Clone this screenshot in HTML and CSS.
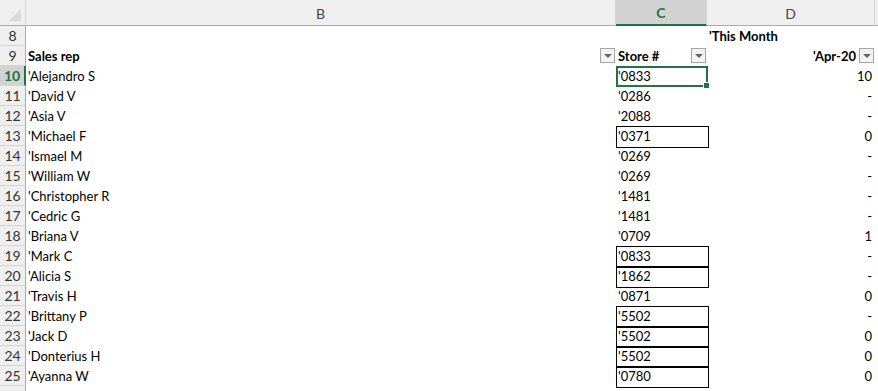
FILE: index.html
```html
<!DOCTYPE html>
<html lang="en">
<head>
    <meta charset="UTF-8">
    <title>Sales by store</title>
    <link rel="stylesheet" href="styles.css">
</head>
<body>
    <div class="sheet">
        <div class="row head-row">
            <div class="corner"><span class="corner-tri"></span></div>
            <div class="col-head">B</div>
            <div class="col-head selected">C</div>
            <div class="col-head">D</div>
            <div class="col-head last"></div>
        </div>

        <div class="row">
            <div class="row-head">8</div>
            <div class="cell"></div>
            <div class="cell"></div>
            <div class="cell bold">'This Month</div>
            <div class="cell"></div>
        </div>
        <div class="row">
            <div class="row-head">9</div>
            <div class="cell bold">Sales rep<span class="filter"></span></div>
            <div class="cell bold">Store #<span class="filter"></span></div>
            <div class="cell bold num has-filter">'Apr-20<span class="filter"></span></div>
            <div class="cell"></div>
        </div>
        <div class="row">
            <div class="row-head selected">10</div>
            <div class="cell">'Alejandro S</div>
            <div class="cell active">'0833</div>
            <div class="cell num">10</div>
            <div class="cell"></div>
        </div>
        <div class="row">
            <div class="row-head">11</div>
            <div class="cell">'David V</div>
            <div class="cell">'0286</div>
            <div class="cell num">-</div>
            <div class="cell"></div>
        </div>
        <div class="row">
            <div class="row-head">12</div>
            <div class="cell">'Asia V</div>
            <div class="cell">'2088</div>
            <div class="cell num">-</div>
            <div class="cell"></div>
        </div>
        <div class="row">
            <div class="row-head">13</div>
            <div class="cell">'Michael F</div>
            <div class="cell boxed">'0371</div>
            <div class="cell num">0</div>
            <div class="cell"></div>
        </div>
        <div class="row">
            <div class="row-head">14</div>
            <div class="cell">'Ismael M</div>
            <div class="cell">'0269</div>
            <div class="cell num">-</div>
            <div class="cell"></div>
        </div>
        <div class="row">
            <div class="row-head">15</div>
            <div class="cell">'William W</div>
            <div class="cell">'0269</div>
            <div class="cell num">-</div>
            <div class="cell"></div>
        </div>
        <div class="row">
            <div class="row-head">16</div>
            <div class="cell">'Christopher R</div>
            <div class="cell">'1481</div>
            <div class="cell num">-</div>
            <div class="cell"></div>
        </div>
        <div class="row">
            <div class="row-head">17</div>
            <div class="cell">'Cedric G</div>
            <div class="cell">'1481</div>
            <div class="cell num">-</div>
            <div class="cell"></div>
        </div>
        <div class="row">
            <div class="row-head">18</div>
            <div class="cell">'Briana V</div>
            <div class="cell">'0709</div>
            <div class="cell num">1</div>
            <div class="cell"></div>
        </div>
        <div class="row">
            <div class="row-head">19</div>
            <div class="cell">'Mark C</div>
            <div class="cell boxed">'0833</div>
            <div class="cell num">-</div>
            <div class="cell"></div>
        </div>
        <div class="row">
            <div class="row-head">20</div>
            <div class="cell">'Alicia S</div>
            <div class="cell boxed">'1862</div>
            <div class="cell num">-</div>
            <div class="cell"></div>
        </div>
        <div class="row">
            <div class="row-head">21</div>
            <div class="cell">'Travis H</div>
            <div class="cell">'0871</div>
            <div class="cell num">0</div>
            <div class="cell"></div>
        </div>
        <div class="row">
            <div class="row-head">22</div>
            <div class="cell">'Brittany P</div>
            <div class="cell boxed">'5502</div>
            <div class="cell num">-</div>
            <div class="cell"></div>
        </div>
        <div class="row">
            <div class="row-head">23</div>
            <div class="cell">'Jack D</div>
            <div class="cell boxed">'5502</div>
            <div class="cell num">0</div>
            <div class="cell"></div>
        </div>
        <div class="row">
            <div class="row-head">24</div>
            <div class="cell">'Donterius H</div>
            <div class="cell boxed">'5502</div>
            <div class="cell num">0</div>
            <div class="cell"></div>
        </div>
        <div class="row">
            <div class="row-head">25</div>
            <div class="cell">'Ayanna W</div>
            <div class="cell boxed">'0780</div>
            <div class="cell num">0</div>
            <div class="cell"></div>
        </div>
        <div class="row">
            <div class="row-head"></div>
            <div class="cell"></div>
            <div class="cell"></div>
            <div class="cell"></div>
            <div class="cell"></div>
        </div>
    </div>
</body>
</html>
```

FILE: styles.css
```css
body {
    margin: 0;
    background-color: #fff;
    font-family: Lato, 'Liberation Sans', sans-serif;
    font-size: 13px;
    color: #000;
    overflow: hidden;
}
.sheet {
    width: 878px;
}
.row {
    display: grid;
    grid-template-columns: 26px 590px 91px 168px 1fr;
    height: 20px;
}
.head-row {
    height: 26px;
}
.corner {
    position: relative;
    background-color: #efefef;
    border-right: 1px solid #d4d4d4;
    border-bottom: 1px solid #ababab;
}
.corner-tri {
    position: absolute;
    right: 4px;
    bottom: 4px;
    width: 0;
    height: 0;
    border-left: 12px solid transparent;
    border-bottom: 12px solid #dadada;
}
.col-head {
    background-color: #efefef;
    border-right: 1px solid #d4d4d4;
    border-bottom: 1px solid #ababab;
    color: #444;
    font-size: 14px;
    display: flex;
    align-items: center;
    justify-content: center;
    padding-top: 1px;
}
.col-head.selected {
    background-color: #d2d2d2;
    color: #217346;
    font-weight: bold;
    border-bottom: 2px solid #217346;
}
.col-head.last {
    border-right: none;
}
.row-head {
    background-color: #efefef;
    border-right: 1px solid #ababab;
    border-bottom: 1px solid #d4d4d4;
    color: #333;
    font-size: 14px;
    display: flex;
    align-items: center;
    justify-content: center;
}
.row-head.selected {
    background-color: #d2d2d2;
    color: #217346;
    font-weight: bold;
    border-right: 2px solid #217346;
}
.cell {
    position: relative;
    display: flex;
    align-items: flex-end;
    padding: 0 3px 2px 2px;
    white-space: nowrap;
    line-height: 16px;
}
.bold {
    font-weight: bold;
}
.num {
    justify-content: flex-end;
}
.has-filter {
    padding-right: 19px;
}
.filter {
    position: absolute;
    right: 1px;
    top: 2px;
    width: 15px;
    height: 15px;
    box-sizing: border-box;
    border: 1px solid #a6a6a6;
    background-color: #f3f3f3;
}
.filter::after {
    content: "";
    position: absolute;
    left: 3px;
    top: 5px;
    border-left: 4px solid transparent;
    border-right: 4px solid transparent;
    border-top: 4px solid #666;
}
.boxed::after {
    content: "";
    position: absolute;
    left: 0;
    top: 0;
    width: 100%;
    height: 100%;
    border: 1px solid #000;
    box-sizing: content-box;
    pointer-events: none;
}
.active::after {
    content: "";
    position: absolute;
    left: 0;
    top: 0;
    right: -1px;
    bottom: -1px;
    border: 2px solid #217346;
}
.active::before {
    content: "";
    position: absolute;
    right: -3px;
    bottom: -3px;
    width: 5px;
    height: 5px;
    background-color: #217346;
    border: 1px solid #fff;
    z-index: 1;
}
```
